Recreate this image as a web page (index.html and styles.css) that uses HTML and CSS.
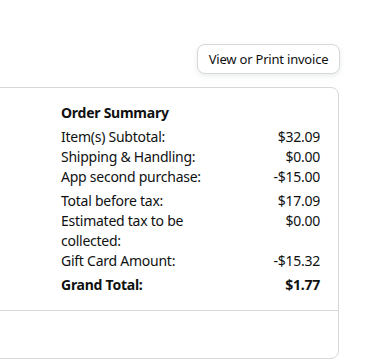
FILE: index.html
```html
<!DOCTYPE html>
<html lang="en">
<head>
    <meta charset="UTF-8">
    <meta name="viewport" content="width=device-width, initial-scale=1.0">
    <title>Order Details</title>
    <link rel="stylesheet" href="styles.css">
</head>
<body>
    <div class="page">
        <div class="actions">
            <button class="invoice-btn">View or Print invoice</button>
        </div>

        <div class="order-box">
            <div class="order-top">
                <div class="summary">
                    <h2 class="summary-title">Order Summary</h2>
                    <div class="summary-group">
                        <div class="row"><span>Item(s) Subtotal:</span><span>$32.09</span></div>
                        <div class="row"><span>Shipping &amp; Handling:</span><span>$0.00</span></div>
                        <div class="row"><span>App second purchase:</span><span>-$15.00</span></div>
                    </div>
                    <div class="summary-group">
                        <div class="row"><span>Total before tax:</span><span>$17.09</span></div>
                        <div class="row"><span class="label-wrap">Estimated tax to be collected:</span><span>$0.00</span></div>
                        <div class="row"><span>Gift Card Amount:</span><span>-$15.32</span></div>
                    </div>
                    <div class="row grand-total"><span>Grand Total:</span><span>$1.77</span></div>
                </div>
            </div>
            <div class="order-bottom"></div>
        </div>
    </div>
</body>
</html>
```

FILE: styles.css
```css
body {
    margin: 0;
    background: #fff;
    color: #0f1111;
    font-family: 'Noto Sans', 'Liberation Sans', sans-serif;
    font-size: 14px;
    line-height: 20px;
    letter-spacing: -0.25px;
}

.page {
    width: 374px;
    padding-top: 44px;
}

.actions {
    display: flex;
    justify-content: flex-end;
    padding-right: 34px;
    margin-bottom: 13px;
}

.invoice-btn {
    font-family: inherit;
    font-size: 13px;
    letter-spacing: -0.2px;
    color: #0f1111;
    background: #fff;
    border: 1px solid #d5d9d9;
    border-radius: 8px;
    box-shadow: 0 2px 5px rgba(213, 217, 217, 0.5);
    height: 30px;
    width: 143px;
    padding: 0;
}

.order-box {
    margin-left: -20px;
    width: 359px;
    border: 1px solid #d5d9d9;
    border-radius: 8px;
    box-sizing: border-box;
}

.order-top {
    display: flex;
    justify-content: flex-end;
    padding: 15px 18px 15px 0;
    border-bottom: 1px solid #d5d9d9;
}

.summary {
    width: 259px;
}

.summary-title {
    font-size: 14px;
    font-weight: 700;
    margin: 0 0 4px;
    line-height: 20px;
}

.summary-group {
    margin-bottom: 4px;
}

.row {
    display: flex;
    justify-content: space-between;
}

.label-wrap {
    width: 130px;
}

.grand-total {
    font-weight: 700;
}

.order-bottom {
    height: 47px;
}
```
